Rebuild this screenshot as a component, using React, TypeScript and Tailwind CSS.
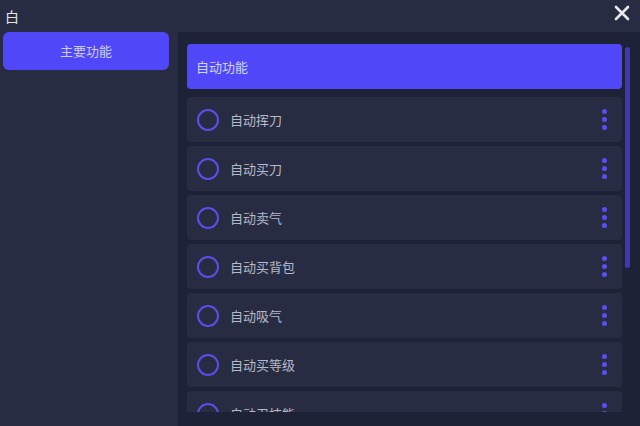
import React from "react";

const items = ["自动挥刀", "自动买刀", "自动卖气", "自动买背包", "自动吸气", "自动买等级", "自动卫技能"];

export default function App() {
  return (
    <div
      className="w-[640px] h-[426px] bg-[#272c43] flex flex-col overflow-hidden"
      style={{ fontFamily: '"Noto Sans CJK SC", "Noto Sans", sans-serif' }}
    >
      <div className="h-[32px] flex items-center justify-between pl-[5px] pr-[10px] shrink-0">
        <span className="text-[14px] text-[#e4e4ec] leading-none">白</span>
        <svg width="16" height="16" viewBox="0 0 16 16" className="mb-[6px]">
          <path d="M2 2 L14 14 M14 2 L2 14" stroke="#e8e8ee" strokeWidth="2.6" strokeLinecap="round" />
        </svg>
      </div>
      <div className="flex flex-1 min-h-0">
        <div className="w-[178px] shrink-0 pl-[3px] pr-[9px]">
          <div className="h-[38px] rounded-[6px] bg-[#5048f8] flex items-center justify-center text-[13px] text-[#cfcdf0]">
            主要功能
          </div>
        </div>
        <div className="flex-1 bg-[#1e2236] flex pt-[12px] pb-[14px] pl-[9px]">
          <div className="flex-1 flex flex-col overflow-hidden">
            <div className="h-[45px] shrink-0 rounded-[4px] bg-[#5048f8] flex items-center pl-[9px] text-[13px] text-[#d4d2f4]">
              自动功能
            </div>
            <div className="flex flex-col gap-[4px] mt-[8px]">
              {items.map((t) => (
                <div
                  key={t}
                  className="h-[45px] shrink-0 rounded-[4px] bg-[#272c43] flex items-center pl-[10px] pr-[15px]"
                >
                  <div className="w-[22px] h-[22px] rounded-full border-[2px] border-[#5a4fe6]" />
                  <span className="ml-[11px] text-[13px] text-[#b6b9c9] flex-1">{t}</span>
                  <div className="flex flex-col gap-[3px]">
                    <div className="w-[5px] h-[5px] rounded-full bg-[#5a4ff0]" />
                    <div className="w-[5px] h-[5px] rounded-full bg-[#5a4ff0]" />
                    <div className="w-[5px] h-[5px] rounded-full bg-[#5a4ff0]" />
                  </div>
                </div>
              ))}
            </div>
          </div>
          <div className="w-[5px] ml-[3px] mr-[10px] pt-[3px]">
            <div className="h-[221px] rounded-full bg-[#3f38b8]" />
          </div>
        </div>
      </div>
    </div>
  );
}
